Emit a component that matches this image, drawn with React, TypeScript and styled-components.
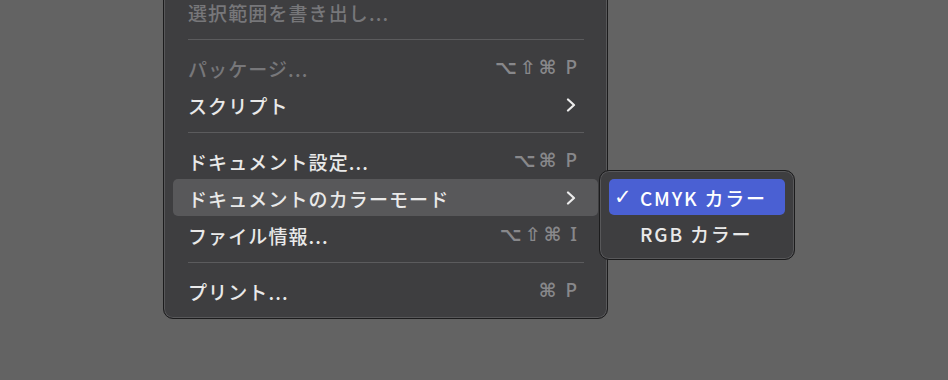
import React from "react";
import styled, { createGlobalStyle } from "styled-components";

const GlobalStyle = createGlobalStyle`
  html, body {
    margin: 0;
    background: #636363;
  }
  body {
    font-family: "Noto Sans CJK JP", "Noto Sans", sans-serif;
  }
`;

const Stage = styled.div`
  height: 380px;
  overflow: hidden;
  padding-left: 163px;
  box-sizing: border-box;
`;

const Menu = styled.div`
  position: relative;
  width: 445px;
  box-sizing: border-box;
  margin-top: -15px;
  padding: 7px 9px 9px;
  background: #3e3e40;
  border: 1px solid #1c1c1d;
  border-radius: 10px;
  box-shadow: inset 0 0 0 1px #58585a;
`;

const Row = styled.div<{ $selected?: boolean }>`
  position: relative;
  display: flex;
  align-items: center;
  height: 37px;
  padding: 0 21px 0 15px;
  border-radius: 5px;
  background: ${(p) => (p.$selected ? "#58585a" : "transparent")};
`;

const Label = styled.span<{ $disabled?: boolean }>`
  flex: 1;
  font-size: 19px;
  line-height: 1;
  padding-top: 1px;
  font-weight: 500;
  letter-spacing: 1.1px;
  color: ${(p) => (p.$disabled ? "#77777a" : "#e9e9e9")};
`;

const Shortcut = styled.span`
  display: flex;
  align-items: center;
  gap: 3px;
  font-family: "DejaVu Sans", sans-serif;
  font-size: 19px;
  line-height: 1;
  font-weight: bold;
  color: #88888b;
`;

const Key = styled.span`
  margin-left: 6px;
  font-family: "Noto Sans", "DejaVu Sans", sans-serif;
  font-size: 19px;
  font-weight: 500;
`;

const Chevron = styled.svg`
  width: 10px;
  height: 14px;
  margin-right: 1px;
`;

const Separator = styled.div`
  height: 19px;
  display: flex;
  align-items: center;
  padding: 0 14px 0 15px;
  &::after {
    content: "";
    flex: 1;
    height: 1px;
    background: #5b5b5d;
  }
`;

const SubMenu = styled.div`
  position: absolute;
  left: calc(100% + 1px);
  top: -9px;
  width: 196px;
  box-sizing: border-box;
  padding: 8px 9px;
  background: #3e3e40;
  border: 1px solid #1c1c1d;
  border-radius: 10px;
  box-shadow: inset 0 0 0 1px #58585a;
  z-index: 2;
`;

const SubRow = styled.div<{ $selected?: boolean }>`
  display: flex;
  align-items: center;
  height: 36px;
  padding-left: 5px;
  border-radius: 5px;
  background: ${(p) => (p.$selected ? "#4a60d3" : "transparent")};
  color: ${(p) => (p.$selected ? "#ffffff" : "#e9e9e9")};
  font-size: 19px;
  line-height: 1;
  font-weight: 500;
  letter-spacing: 1.8px;
`;

const Check = styled.span`
  width: 26px;
  font-family: "DejaVu Sans", sans-serif;
  font-size: 21px;
  font-weight: bold;
  letter-spacing: 0;
`;

function Arrow() {
  return (
    <Chevron viewBox="0 0 10 14">
      <polyline
        points="2,1.5 8,7 2,12.5"
        fill="none"
        stroke="#ececec"
        strokeWidth="2.2"
        strokeLinecap="round"
        strokeLinejoin="round"
      />
    </Chevron>
  );
}

function Keys({ mods, letter }: { mods: string; letter: string }) {
  return (
    <Shortcut>
      {mods.split("").map((m, i) => (
        <span key={i}>{m}</span>
      ))}
      <Key>{letter}</Key>
    </Shortcut>
  );
}

export default function App() {
  return (
    <>
      <GlobalStyle />
      <Stage>
        <Menu>
          <Row>
            <Label $disabled>選択範囲を書き出し...</Label>
          </Row>
          <Separator />
          <Row>
            <Label $disabled>パッケージ...</Label>
            <Keys mods="⌥⇧⌘" letter="P" />
          </Row>
          <Row>
            <Label>スクリプト</Label>
            <Arrow />
          </Row>
          <Separator />
          <Row>
            <Label>ドキュメント設定...</Label>
            <Keys mods="⌥⌘" letter="P" />
          </Row>
          <Row $selected>
            <Label>ドキュメントのカラーモード</Label>
            <Arrow />
            <SubMenu>
              <SubRow $selected>
                <Check>✓</Check>
                CMYK カラー
              </SubRow>
              <SubRow>
                <Check />
                RGB カラー
              </SubRow>
            </SubMenu>
          </Row>
          <Row>
            <Label>ファイル情報...</Label>
            <Keys mods="⌥⇧⌘" letter="I" />
          </Row>
          <Separator />
          <Row>
            <Label>プリント...</Label>
            <Keys mods="⌘" letter="P" />
          </Row>
        </Menu>
      </Stage>
    </>
  );
}
